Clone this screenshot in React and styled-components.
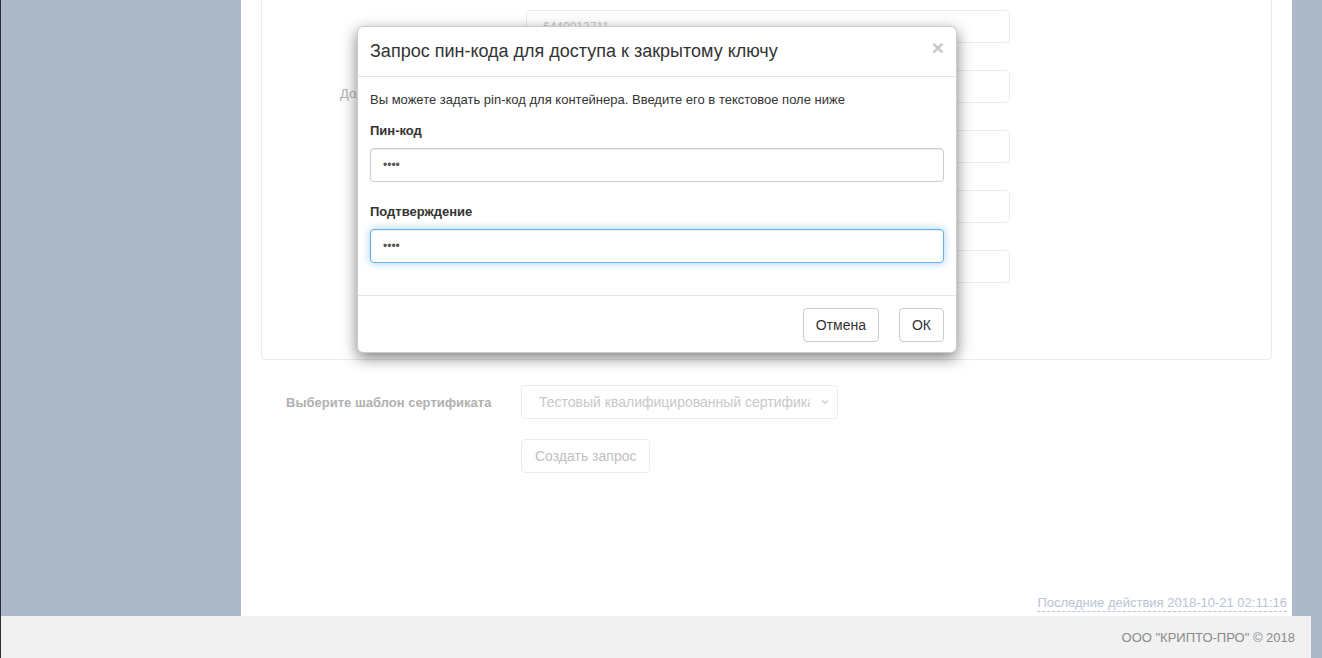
import React from "react";
import styled, { createGlobalStyle } from "styled-components";

const GlobalStyle = createGlobalStyle`
    html, body {
        margin: 0;
        padding: 0;
        height: 658px;
        overflow: hidden;
        background: #adb8c8;
        font-family: "Liberation Sans", Arial, sans-serif;
        color: #333;
    }
    body {
        border-left: 1px solid #2b313b;
    }
`;

const Layout = styled.div`
    display: flex;
    flex-direction: column;
    height: 658px;
`;

const Columns = styled.div`
    display: flex;
    height: 616px;
`;

const Gutter = styled.div`
    width: ${(p) => p.$w}px;
    flex-shrink: 0;
    background: #adb8c8;
`;

const Main = styled.main`
    width: 1051px;
    flex-shrink: 0;
    background: #fff;
    display: flex;
    flex-direction: column;
    overflow: hidden;
`;

const Panel = styled.section`
    margin: -20px 20px 0 20px;
    height: 380px;
    box-sizing: border-box;
    border: 1px solid #ebebeb;
    border-radius: 4px;
    padding-top: 29px;
    display: flex;
    flex-direction: column;
    gap: 27px;
`;

const PanelRow = styled.div`
    display: flex;
    height: 33px;
`;

const PanelLabel = styled.div`
    width: 264px;
    flex-shrink: 0;
    padding: 16px 0 0 78px;
    box-sizing: border-box;
    font-size: 13px;
    color: #b3b3b3;
    white-space: nowrap;
`;

const PanelInput = styled.div`
    width: 484px;
    height: 33px;
    box-sizing: border-box;
    border: 1px solid #ececec;
    border-radius: 4px;
    padding: 0 16px;
    display: flex;
    align-items: center;
    font-size: 12px;
    color: #c4c4c4;
`;

const TemplateRow = styled.div`
    display: flex;
    align-items: center;
    margin-top: 25px;
    padding-left: 45px;
`;

const TemplateLabel = styled.div`
    width: 235px;
    font-size: 13px;
    font-weight: bold;
    color: #b0b0b0;
`;

const FakeSelect = styled.div`
    width: 317px;
    height: 34px;
    box-sizing: border-box;
    border: 1px solid #ececec;
    border-radius: 4px;
    display: flex;
    align-items: center;
    padding: 0 7px 0 17px;
    font-size: 14px;
    color: #c8c8c8;

    span {
        flex: 1;
        overflow: hidden;
        white-space: nowrap;
        margin-right: 10px;
    }
`;

const ActionRow = styled.div`
    padding-left: 280px;
    margin-top: 20px;
`;

const GhostButton = styled.button`
    height: 34px;
    padding: 0 13px;
    background: #fff;
    border: 1px solid #ececec;
    border-radius: 4px;
    font-family: inherit;
    font-size: 14px;
    color: #c0c0c0;
`;

const Spacer = styled.div`
    flex: 1;
`;

const LastAction = styled.div`
    align-self: flex-end;
    margin: 0 5px 4px 0;
    font-size: 13px;
    color: #b7c3d6;
    border-bottom: 1px dashed #b7c3d6;
    line-height: 16px;
`;

const Footer = styled.footer`
    height: 42px;
    width: 1310px;
    background: #f1f1f1;
    display: flex;
    align-items: center;
    justify-content: flex-end;
    padding-right: 16px;
    box-sizing: border-box;
    font-size: 13px;
    color: #8a8a8a;
`;

const Modal = styled.div`
    position: absolute;
    left: 357px;
    top: 26px;
    width: 598px;
    background: #fff;
    border: 1px solid rgba(0, 0, 0, 0.2);
    border-radius: 6px;
    box-shadow: 0 5px 15px rgba(0, 0, 0, 0.5);
`;

const ModalHeader = styled.div`
    height: 50px;
    box-sizing: border-box;
    border-bottom: 1px solid #e5e5e5;
    padding: 0 12px;
    display: flex;
    align-items: center;
    justify-content: space-between;
`;

const ModalTitle = styled.h4`
    margin: 0;
    font-size: 18px;
    font-weight: normal;
    color: #333;
`;

const Close = styled.span`
    font-size: 21px;
    font-weight: bold;
    color: #c8c8c8;
    line-height: 1;
    margin-top: -8px;
`;

const ModalBody = styled.div`
    padding: 14px 12px 32px;
    font-size: 13px;
`;

const Hint = styled.p`
    margin: 0 0 13px;
    line-height: 18px;
    color: #333;
`;

const FieldLabel = styled.label`
    display: block;
    font-weight: bold;
    color: #333;
    line-height: 18px;
    margin-bottom: 8px;
`;

const Field = styled.input`
    display: block;
    width: 100%;
    height: 34px;
    box-sizing: border-box;
    border: 1px solid ${(p) => (p.$focus ? "#66afe9" : "#ccc")};
    border-radius: 4px;
    padding: 0 12px;
    font-family: inherit;
    font-size: 12px;
    color: #555;
    outline: none;
    box-shadow: ${(p) =>
        p.$focus
            ? "inset 0 1px 1px rgba(0,0,0,.075), 0 0 8px rgba(102,175,233,.6)"
            : "inset 0 1px 1px rgba(0,0,0,.075)"};
    margin-bottom: ${(p) => p.$mb || 0}px;
`;

const ModalFooter = styled.div`
    border-top: 1px solid #e5e5e5;
    padding: 12px 12px 10px;
    display: flex;
    justify-content: flex-end;
    gap: 20px;
`;

const DialogButton = styled.button`
    height: 34px;
    padding: 0 12px;
    background: #fff;
    border: 1px solid #ccc;
    border-radius: 4px;
    font-family: inherit;
    font-size: 14px;
    color: #333;
`;

const panelRows = ["", "Должность", "", "", ""];

export default function App() {
    return (
        <>
            <GlobalStyle />
            <Layout>
                <Columns>
                    <Gutter $w={240} />
                    <Main>
                        <Panel>
                            {panelRows.map((label, i) => (
                                <PanelRow key={i}>
                                    <PanelLabel>{label}</PanelLabel>
                                    <PanelInput>{i === 0 ? "6449013711" : ""}</PanelInput>
                                </PanelRow>
                            ))}
                        </Panel>
                        <TemplateRow>
                            <TemplateLabel>Выберите шаблон сертификата</TemplateLabel>
                            <FakeSelect>
                                <span>Тестовый квалифицированный сертификат</span>
                                <svg width="10" height="10" viewBox="0 0 10 10">
                                    <path d="M2 3.5 L5 6.5 L8 3.5" fill="none" stroke="#c8c8c8" strokeWidth="1.2" />
                                </svg>
                            </FakeSelect>
                        </TemplateRow>
                        <ActionRow>
                            <GhostButton>Создать запрос</GhostButton>
                        </ActionRow>
                        <Spacer />
                        <LastAction>Последние действия 2018-10-21 02:11:16</LastAction>
                    </Main>
                    <Gutter $w={30} />
                </Columns>
                <Footer>ООО "КРИПТО-ПРО" © 2018</Footer>
            </Layout>

            <Modal>
                <ModalHeader>
                    <ModalTitle>Запрос пин-кода для доступа к закрытому ключу</ModalTitle>
                    <Close>×</Close>
                </ModalHeader>
                <ModalBody>
                    <Hint>Вы можете задать pin-код для контейнера. Введите его в текстовое поле ниже</Hint>
                    <FieldLabel>Пин-код</FieldLabel>
                    <Field type="password" defaultValue="1234" readOnly $mb={21} />
                    <FieldLabel>Подтверждение</FieldLabel>
                    <Field type="password" defaultValue="1234" readOnly $focus />
                </ModalBody>
                <ModalFooter>
                    <DialogButton>Отмена</DialogButton>
                    <DialogButton>ОК</DialogButton>
                </ModalFooter>
            </Modal>
        </>
    );
}
